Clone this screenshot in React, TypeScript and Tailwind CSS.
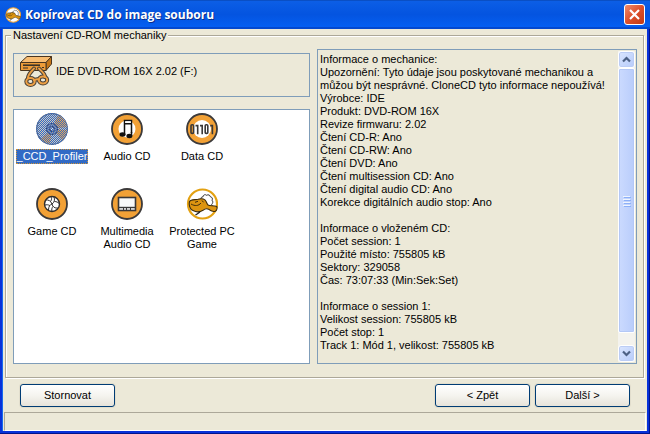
import type { ReactNode } from 'react';

const driveInfo = [
  'Informace o mechanice:',
  'Upozornění: Tyto údaje jsou poskytované mechanikou a',
  'můžou být nesprávné. CloneCD tyto informace nepoužívá!',
  'Výrobce: IDE',
  'Produkt: DVD-ROM 16X',
  'Revize firmwaru: 2.02',
  'Čtení CD-R: Ano',
  'Čtení CD-RW: Ano',
  'Čtení DVD: Ano',
  'Čtení multisession CD: Ano',
  'Čtení digital audio CD: Ano',
  'Korekce digitálních audio stop: Ano',
  '',
  'Informace o vloženém CD:',
  'Počet session: 1',
  'Použité místo: 755805 kB',
  'Sektory: 329058',
  'Čas: 73:07:33 (Min:Sek:Set)',
  '',
  'Informace o session 1:',
  'Velikost session: 755805 kB',
  'Počet stop: 1',
  'Track 1: Mód 1, velikost: 755805 kB',
].join('\n');

function SheepIcon({ className, ring }: { className: string; ring: string }) {
  return (
    <svg viewBox="0 0 32 32" className={className} aria-hidden="true">
      <circle cx="16.500" cy="16" r="14.500" fill="#fff" stroke={ring} strokeWidth="2.200" />
      <path
        d="M15 12c-.6-2.200.8-3.400 1.800-3 .3-2.300 2.600-2.900 3.800-1.700 1.600-1.100 3.500-.2 3.700 1.400 2 .3 2.600 2.200 1.700 3.500 1.300 1.200.9 3.200-.4 4.100l1 2.200"
        fill="#fff"
        stroke="#333"
        strokeWidth="1"
      />
      <path
        d="M3.500 13.500C5 11 9 12 12 11.300c2.500-.8 5.500-.6 7.200.8 1.200 1.200 1.300 3.200 2.800 4.900 2 1.300 5.500.2 8.800 1.500.7 1.400-.1 3.700-1.300 4.700-2.500.8-5-.2-7-2-2-1-3.500-.4-5.500 1-3 2-7 2-10 .4C4 21.500 2.500 17 3.500 13.500Z"
        fill="#dc9410"
        stroke="#3d2c0c"
        strokeWidth="1.100"
      />
      <path d="M5 16c4 2.300 7.500 2 10-1M9 14.300l3-1M16 12.500l1.500 1.800" fill="none" stroke="#3d2c0c" strokeWidth="1" />
      <path d="M14 23.500c-.6 1.500-2.500 2-4.500 3.500" fill="none" stroke="#222" strokeWidth="1.300" />
    </svg>
  );
}

function DriveIcon() {
  return (
    <svg viewBox="0 0 34 34" className="size-[34px] shrink-0" aria-hidden="true">
      <g stroke="#4a3620" strokeWidth="1" strokeLinejoin="round">
        <path d="M1.500 8.500 8 2.500h24.500l-5.500 6Z" fill="#f8bc70" />
        <path d="M27 8.500l5.500-6v7.500L27 16.500Z" fill="#c87818" />
        <path d="M1.500 8.500H27v8H1.500Z" fill="#ee9c38" />
      </g>
      <path d="M4 11.200h17" stroke="#3b3328" strokeWidth="1.600" />
      <path d="M4 14h5M23 13.500h2" stroke="#3b3328" strokeWidth="1" />
      <g fill="none" strokeLinecap="round">
        <g stroke="#4a4238" strokeWidth="4">
          <path d="M9 24c0-4 4-7 6-9.500M26 23c0-4-4-6-6-8.500M15 26.500c1.500-1.500 3-1.500 5-1" />
          <ellipse cx="11.500" cy="27.500" rx="4.200" ry="3.400" />
          <ellipse cx="24" cy="26" rx="4.200" ry="3.400" />
        </g>
        <g stroke="#eda044" strokeWidth="2">
          <path d="M9 24c0-4 4-7 6-9.500M26 23c0-4-4-6-6-8.500M15 26.500c1.500-1.500 3-1.500 5-1" />
          <ellipse cx="11.500" cy="27.500" rx="4.200" ry="3.400" />
          <ellipse cx="24" cy="26" rx="4.200" ry="3.400" />
        </g>
      </g>
    </svg>
  );
}

function Disc({ children }: { children: ReactNode }) {
  return (
    <svg viewBox="0 0 32 32" className="size-8" aria-hidden="true">
      <circle cx="16" cy="16" r="15" fill="#f2a136" stroke="#3c3a3a" strokeWidth="1.800" />
      {children}
    </svg>
  );
}

function ProfilerIcon() {
  return (
    <svg viewBox="0 0 32 32" className="size-8" aria-hidden="true">
      <defs>
        <pattern id="dither" width="2" height="2" patternUnits="userSpaceOnUse">
          <path d="M0 0h1v1H0ZM1 1h1v1H1Z" fill="#316ac5" shapeRendering="crispEdges" />
        </pattern>
      </defs>
      <circle cx="16" cy="16" r="15.300" fill="#cfc8bd" stroke="#5b6478" strokeWidth="1.200" />
      <path d="M16 16 22 2A15 15 0 0 1 31 14Z" fill="#f0a850" />
      <path d="M16 16 31 17A15 15 0 0 1 26 27Z" fill="#f0a850" />
      <path d="M16 16 14 30.800A15 15 0 0 1 5 26Z" fill="#f0a850" />
      <circle cx="16" cy="16" r="5.500" fill="#9a9aa4" stroke="#3b3b54" strokeWidth="1.200" />
      <circle cx="16" cy="16" r="2.300" fill="#e7e7e7" stroke="#3b3b54" strokeWidth="1.200" />
      <circle cx="16" cy="16" r="16" fill="url(#dither)" />
    </svg>
  );
}

function AudioIcon() {
  return (
    <Disc>
      <circle cx="16" cy="16" r="8.500" fill="#fff" />
      <path d="M13.500 22V7.500h7V20M13.500 10.800h7" fill="none" stroke="#111" strokeWidth="1.500" />
      <path d="M14.200 8.300h5.600v1.700h-5.600Z" fill="#fff" />
      <ellipse cx="11.500" cy="21.500" rx="3" ry="2.200" fill="#111" />
      <ellipse cx="18.400" cy="23" rx="3" ry="2.200" fill="#111" />
      <path d="M20.500 19v4" stroke="#111" strokeWidth="1.500" />
    </Disc>
  );
}

function DataIcon() {
  return (
    <Disc>
      <circle cx="16" cy="16" r="9" fill="#fff" />
      <g fill="none" stroke="#3a3838" strokeWidth="1.600">
        <rect x="5" y="11.800" width="2.600" height="8.600" rx="1" />
        <path d="M9.500 12.600h2.200v8.600M14 12.600h2.200v8.600" />
        <rect x="19.200" y="11.800" width="2.600" height="8.600" rx="1" />
        <path d="M24.200 12.600h2.200v8.600" />
      </g>
    </Disc>
  );
}

function GameIcon() {
  return (
    <Disc>
      <circle cx="16" cy="16" r="7.500" fill="#fff" stroke="#2f2d2d" strokeWidth="1.400" />
      <path
        d="M16 16c-1-3-3.500-4.500-6.500-4M16 16c2.500-1.500 3-4.500 2-7M16 16c.5 3 3 4.500 6 4M14.800 13c1-1.600 1-3 .2-4.500M18.500 13.500c2 0 3.500.8 4.500 2M16 16c-2 .5-3.500 2.500-3.500 6M13.800 17.500c-1.500-.8-3.300-1-5-.4M17 18.500c-1.200 1.300-1.500 3-1 5"
        fill="none"
        stroke="#2f2d2d"
        strokeWidth="1"
      />
    </Disc>
  );
}

function MultimediaIcon() {
  return (
    <Disc>
      <rect x="7.500" y="9.500" width="17" height="13" fill="#f8f8f8" stroke="#3a3838" strokeWidth="1.600" />
      <path d="M7.500 19.500h17" stroke="#3a3838" strokeWidth="1.400" />
      <path d="M12.500 20v2.500M15.500 20v2.500M19.500 20v2.500" stroke="#3a3838" strokeWidth="1" />
    </Disc>
  );
}

const profiles: { name: string; icon: ReactNode; selected?: boolean }[] = [
  { name: '_CCD_Profiler', icon: <ProfilerIcon />, selected: true },
  { name: 'Audio CD', icon: <AudioIcon /> },
  { name: 'Data CD', icon: <DataIcon /> },
  { name: 'Game CD', icon: <GameIcon /> },
  { name: 'Multimedia Audio CD', icon: <MultimediaIcon /> },
  { name: 'Protected PC Game', icon: <SheepIcon className="size-8" ring="#e3a112" /> },
];

function WizardButton({ children }: { children: ReactNode }) {
  return (
    <button
      type="button"
      className="h-[23px] w-[95px] rounded-[3px] border border-[#003c74] bg-linear-to-b from-white via-[#f5f4ef] to-[#e6e3da] text-center shadow-[0_0_0_1px_#e2decd]"
    >
      {children}
    </button>
  );
}

function ScrollArrow({ label, path }: { label: string; path: string }) {
  return (
    <button
      type="button"
      aria-label={label}
      className="flex h-[17px] w-full shrink-0 items-center justify-center rounded-[3px] border border-white bg-linear-to-br from-[#dbe6ff] to-[#b6cbfa] shadow-[inset_0_0_0_1px_#bccdf5]"
    >
      <svg viewBox="0 0 9 7" className="h-[7px] w-[9px]" aria-hidden="true">
        <path d={path} fill="none" stroke="#4d6185" strokeWidth="2.200" />
      </svg>
    </button>
  );
}

export default function App() {
  return (
    <div className="flex min-h-screen flex-col bg-[#0831d9] font-['Liberation_Sans',Arial,sans-serif] text-[11px] leading-[13px] text-black shadow-[inset_-1px_-1px_0_#00138c]">
      <header className="flex h-[29px] items-center bg-linear-to-b from-[#0d5fe6] via-[#0454e0] to-[#0561f5] pr-[5px] pl-[5px] shadow-[inset_0_1px_0_#0a4fc4,inset_0_-2px_0_#0449cf]">
        <SheepIcon className="size-4 shrink-0" ring="#f0a030" />
        <h1 className="ml-1 flex-1 font-['Open_Sans','Noto_Sans',sans-serif] text-[12px] leading-4 font-bold text-white [text-shadow:1px_1px_0_#0a2f8c]">
          Kopírovat CD do image souboru
        </h1>
        <button
          type="button"
          aria-label="Zavřít"
          className="flex size-[21px] items-center justify-center rounded-[3px] border border-white bg-linear-to-br from-[#ee8a6a] via-[#dd4f2a] to-[#c23a14]"
        >
          <svg viewBox="0 0 13 13" className="size-[13px]" aria-hidden="true">
            <path d="M2 2l9 9M11 2l-9 9" stroke="#fff" strokeWidth="2.200" />
          </svg>
        </button>
      </header>

      <main className="mx-[3px] mb-[3px] flex flex-1 flex-col bg-[#ece9d8] shadow-[-1px_0_0_#166aee]">
        <fieldset className="mr-[3px] ml-[2px] flex-1 border border-[#aca899] pr-[6px] pb-3 pl-[7px] shadow-[1px_1px_0_#fff,inset_1px_1px_0_#fff]">
          <legend className="-ml-[2px] bg-[#ece9d8] px-[2px]">Nastavení CD-ROM mechaniky</legend>
          <div className="flex h-full gap-[7px] pt-[7px]">
            <div className="flex w-[297px] flex-col gap-3 pt-1">
              <div className="flex h-11 items-center border border-[#7f9db9] pr-2 pb-2 pl-[5px]">
                <DriveIcon />
                <span className="ml-[3px]">IDE DVD-ROM 16X 2.02 (F:)</span>
              </div>
              <ul className="grid min-h-[255px] flex-1 auto-rows-[75px] grid-cols-[74px_74px_74px] gap-x-px border border-[#7f9db9] bg-white pt-[3px] pl-px">
                {profiles.map((p) => (
                  <li key={p.name}>
                    <button type="button" className="flex w-full flex-col items-center gap-1">
                      {p.icon}
                      <span
                        className={
                          p.selected
                            ? 'bg-[#316ac5] p-px text-white outline-1 -outline-offset-1 outline-[#ce953a] outline-dotted'
                            : 'p-px'
                        }
                      >
                        {p.name}
                      </span>
                    </button>
                  </li>
                ))}
              </ul>
            </div>

            <div className="flex flex-1 border border-[#7f9db9] p-px">
              <textarea
                readOnly
                aria-label="Informace o mechanice"
                className="min-w-0 flex-1 resize-none overflow-hidden bg-transparent px-px pt-[2px] whitespace-pre outline-none"
                value={driveInfo}
              />
              <div className="flex w-[17px] flex-col bg-[#f4f3ee]">
                <ScrollArrow label="Nahoru" path="M1 5.500l3.500-3.500 3.500 3.500" />
                <div className="mb-3 flex flex-1 flex-col items-center justify-center gap-[2px] rounded-[2px] border border-white bg-linear-to-r from-[#cbdafe] to-[#b9cdfb] shadow-[inset_0_0_0_1px_#b4c8f6]">
                  <span className="h-px w-[7px] bg-[#eef4fe] shadow-[1px_1px_0_#8cb0f8]" />
                  <span className="h-px w-[7px] bg-[#eef4fe] shadow-[1px_1px_0_#8cb0f8]" />
                  <span className="h-px w-[7px] bg-[#eef4fe] shadow-[1px_1px_0_#8cb0f8]" />
                  <span className="h-px w-[7px] bg-[#eef4fe] shadow-[1px_1px_0_#8cb0f8]" />
                </div>
                <ScrollArrow label="Dolů" path="M1 1.500l3.500 3.500 3.500-3.500" />
              </div>
            </div>
          </div>
        </fieldset>

        <div className="flex items-center gap-[5px] pt-[6px] pr-[17px] pb-[5px] pl-[17px]">
          <div className="flex-1">
            <WizardButton>Stornovat</WizardButton>
          </div>
          <WizardButton>&lt; Zpět</WizardButton>
          <WizardButton>Další &gt;</WizardButton>
        </div>

        <footer className="mx-px h-[19px] border border-t-[#aca899] border-r-white border-b-white border-l-[#aca899]" />
      </main>
    </div>
  );
}
